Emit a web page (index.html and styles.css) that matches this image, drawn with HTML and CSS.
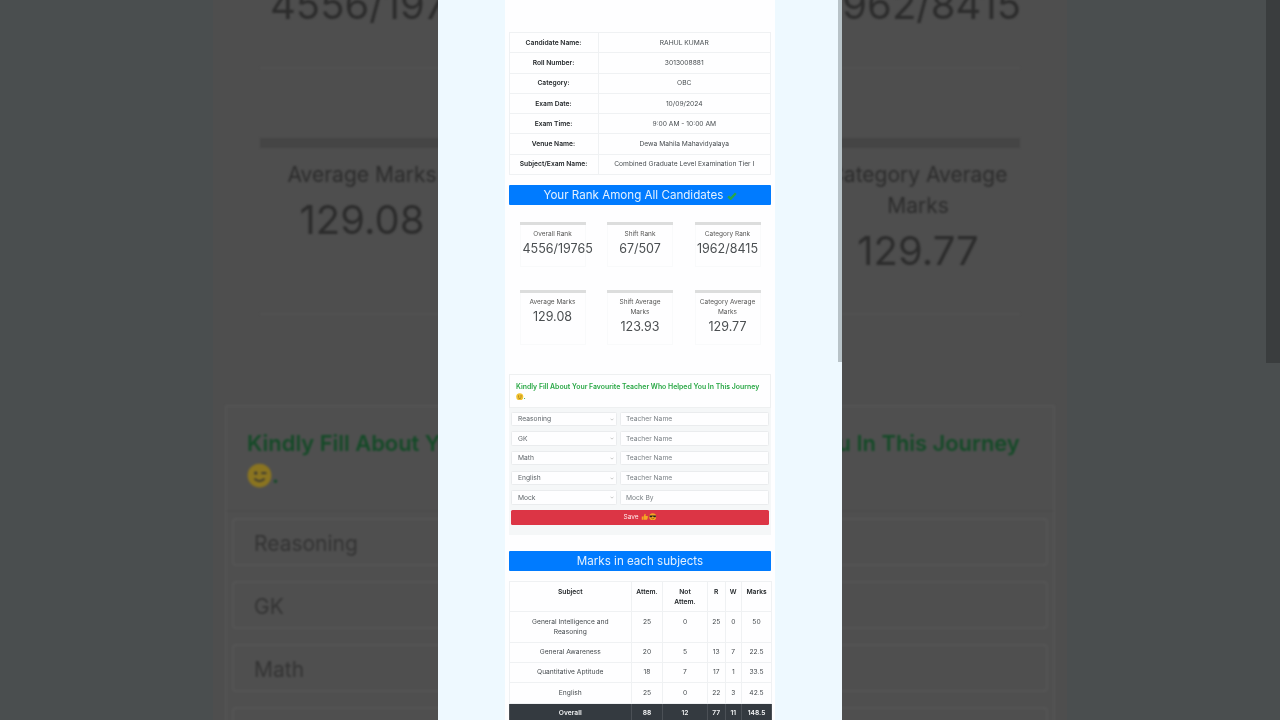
FILE: index.html
```html
<!DOCTYPE html>
<html lang="en">
<head>
<meta charset="utf-8">
<title>Your Rank</title>
<link rel="stylesheet" href="styles.css">
</head>
<body>
<div class="backdrop">
  <div class="bd-page">
    <div class="bd-stats">
      <div class="bd-card"><div class="bd-bar"></div><div class="bd-label">Overall Rank</div><div class="bd-value">4556/19765</div></div>
      <div class="bd-card"><div class="bd-bar"></div><div class="bd-label">Shift Rank</div><div class="bd-value">67/507</div></div>
      <div class="bd-card"><div class="bd-bar"></div><div class="bd-label">Category Rank</div><div class="bd-value">1962/8415</div></div>
      <div class="bd-card"><div class="bd-bar"></div><div class="bd-label">Average Marks</div><div class="bd-value">129.08</div></div>
      <div class="bd-card"><div class="bd-bar"></div><div class="bd-label">Shift Average Marks</div><div class="bd-value">123.93</div></div>
      <div class="bd-card"><div class="bd-bar"></div><div class="bd-label">Category Average Marks</div><div class="bd-value">129.77</div></div>
    </div>
    <div class="bd-panel">
      <div class="bd-head">Kindly Fill About Your Favourite Teacher Who Helped You In This Journey
        <svg class="bd-emoji" viewBox="0 0 20 20"><circle cx="10" cy="10" r="9.5" fill="#8a7420"/><circle cx="7" cy="8" r="1.3" fill="#333"/><path d="M11.5 8h4M6 12.5q4 4 8 0" stroke="#333" stroke-width="1.4" fill="none"/></svg>.
      </div>
      <div class="bd-box">Reasoning</div>
      <div class="bd-box">GK</div>
      <div class="bd-box">Math</div>
      <div class="bd-box">English</div>
    </div>
  </div>
  <div class="bd-strip"></div>
</div>

<main class="phone">
  <div class="sheet">
    <table class="info">
      <tr><th>Candidate Name:</th><td>RAHUL KUMAR</td></tr>
      <tr><th>Roll Number:</th><td>3013008881</td></tr>
      <tr><th>Category:</th><td>OBC</td></tr>
      <tr><th>Exam Date:</th><td>10/09/2024</td></tr>
      <tr><th>Exam Time:</th><td>9:00 AM - 10:00 AM</td></tr>
      <tr><th>Venue Name:</th><td>Dewa Mahila Mahavidyalaya</td></tr>
      <tr><th>Subject/Exam Name:</th><td>Combined Graduate Level Examination Tier I</td></tr>
    </table>

    <h2 class="banner">Your Rank Among All Candidates
      <svg class="check" viewBox="0 0 12 10"><path d="M1.2 5.4 4.3 8.4 10.8 1.6" fill="none" stroke="#28a745" stroke-width="3"/></svg>
    </h2>

    <section class="stats">
      <div class="stat"><div class="stat-bar"></div><div class="stat-label">Overall Rank</div><div class="stat-value">4556/19765</div></div>
      <div class="stat"><div class="stat-bar"></div><div class="stat-label">Shift Rank</div><div class="stat-value">67/507</div></div>
      <div class="stat"><div class="stat-bar"></div><div class="stat-label">Category Rank</div><div class="stat-value">1962/8415</div></div>
      <div class="stat"><div class="stat-bar"></div><div class="stat-label">Average Marks</div><div class="stat-value">129.08</div></div>
      <div class="stat"><div class="stat-bar"></div><div class="stat-label">Shift Average Marks</div><div class="stat-value">123.93</div></div>
      <div class="stat"><div class="stat-bar"></div><div class="stat-label">Category Average Marks</div><div class="stat-value">129.77</div></div>
    </section>

    <form class="panel">
      <div class="panel-head">Kindly Fill About Your Favourite Teacher Who Helped You In This Journey
        <svg class="emoji" viewBox="0 0 20 20"><circle cx="10" cy="10" r="9.5" fill="#f2c230"/><circle cx="7" cy="8" r="1.4" fill="#6b4a10"/><path d="M11.5 8h4M6 12.5q4 4 8 0" stroke="#6b4a10" stroke-width="1.5" fill="none"/></svg>.
      </div>
      <div class="row"><div class="select-wrap"><select><option>Reasoning</option></select><svg class="chev" viewBox="0 0 6 4"><path d="M.8.8 3 3 5.2.8" fill="none" stroke="#999" stroke-width=".8"/></svg></div><input type="text" placeholder="Teacher Name"></div>
      <div class="row"><div class="select-wrap"><select><option>GK</option></select><svg class="chev" viewBox="0 0 6 4"><path d="M.8.8 3 3 5.2.8" fill="none" stroke="#999" stroke-width=".8"/></svg></div><input type="text" placeholder="Teacher Name"></div>
      <div class="row"><div class="select-wrap"><select><option>Math</option></select><svg class="chev" viewBox="0 0 6 4"><path d="M.8.8 3 3 5.2.8" fill="none" stroke="#999" stroke-width=".8"/></svg></div><input type="text" placeholder="Teacher Name"></div>
      <div class="row"><div class="select-wrap"><select><option>English</option></select><svg class="chev" viewBox="0 0 6 4"><path d="M.8.8 3 3 5.2.8" fill="none" stroke="#999" stroke-width=".8"/></svg></div><input type="text" placeholder="Teacher Name"></div>
      <div class="row"><div class="select-wrap"><select><option>Mock</option></select><svg class="chev" viewBox="0 0 6 4"><path d="M.8.8 3 3 5.2.8" fill="none" stroke="#999" stroke-width=".8"/></svg></div><input type="text" placeholder="Mock By"></div>
      <button type="button" class="save">Save
        <svg class="btn-emoji" viewBox="0 0 20 20"><path d="M2 9h4v9H2zM7 9l3-7q3 0 2.500 3L12 8h5q2 0 1.500 2l-1.500 6q-.5 2-2 2H7z" fill="#f5a623"/></svg><svg class="btn-emoji" viewBox="0 0 20 20"><circle cx="10" cy="10" r="9.500" fill="#f5a623"/><path d="M1.500 6.500h17v2l-1 3h-5l-1.500-3h-2l-1.500 3h-5l-1-3z" fill="#222"/><path d="M6 14q4 3 8 0" stroke="#7a3c00" stroke-width="1.400" fill="none"/></svg>
      </button>
    </form>

    <h2 class="banner marks-banner">Marks in each subjects</h2>

    <table class="marks">
      <colgroup><col class="c1"><col class="c2"><col class="c3"><col class="c4"><col class="c5"><col class="c6"></colgroup>
      <tr><th>Subject</th><th>Attem.</th><th>Not Attem.</th><th>R</th><th>W</th><th>Marks</th></tr>
      <tr><td>General Intelligence and Reasoning</td><td>25</td><td>0</td><td>25</td><td>0</td><td>50</td></tr>
      <tr><td>General Awareness</td><td>20</td><td>5</td><td>13</td><td>7</td><td>22.5</td></tr>
      <tr><td>Quantitative Aptitude</td><td>18</td><td>7</td><td>17</td><td>1</td><td>33.5</td></tr>
      <tr><td>English</td><td>25</td><td>0</td><td>22</td><td>3</td><td>42.5</td></tr>
      <tr class="total"><th>Overall</th><th>88</th><th>12</th><th>77</th><th>11</th><th>148.5</th></tr>
    </table>
  </div>
  <div class="scrollbar"></div>
</main>
</body>
</html>
```

FILE: styles.css
```css
* { box-sizing: border-box; }
html, body { margin: 0; height: 720px; overflow: hidden; }
body {
  position: relative;
  font-family: Inter, "Noto Sans", sans-serif;
  background: linear-gradient(to right, #4a4e4f 0 213px, #4e4e4e 213px 1067px, #4a4e4f 1067px);
}

/* Blurred video backdrop */
.backdrop { position: absolute; inset: 0; overflow: hidden; }
.bd-page { width: 830px; margin: 0 auto; filter: blur(1.200px); color: #2c2c2c; }
.bd-stats {
  display: grid;
  grid-template-columns: repeat(3, 204px);
  column-gap: 74px;
  row-gap: 69px;
  padding: 0 35px;
  margin-top: -77px;
}
.bd-card { height: 146px; text-align: center; border-bottom: 2px solid #525252; }
.bd-card:nth-child(n+4) { height: 177px; }
.bd-bar { height: 10px; background: #454545; margin-bottom: 11px; }
.bd-label { font-size: 21px; line-height: 31px; margin-bottom: 7px; }
.bd-value { font-size: 40px; line-height: 46px; white-space: nowrap; }
.bd-card:nth-child(-n+3) .bd-value { text-align: left; padding-left: 10px; }
.bd-panel {
  margin-top: 90px;
  height: 400px;
  border: 2px solid #545454;
  background: #4f4f4f;
}
.bd-head {
  height: 105px;
  padding: 20px 20px 0;
  font-size: 21.900px;
  line-height: 32px;
  font-weight: 600;
  color: #144a27;
  border-bottom: 2px solid #4b4b4b;
  margin-bottom: 6px;
}
.bd-emoji { width: 25px; height: 25px; vertical-align: -5px; }
.bd-box {
  margin: 0 5px 15px;
  height: 48px;
  padding-left: 20px;
  font-size: 21px;
  line-height: 48px;
  border: 2px solid #555;
  border-radius: 4px;
  color: #333;
}
.bd-strip { position: absolute; top: 0; right: 0; width: 14px; height: 363px; background: #3a3d3e; }

/* Foreground phone column */
.phone {
  position: relative;
  width: 404px;
  height: 720px;
  margin: 0 auto;
  overflow: hidden;
  background: #eef9ff;
}
.sheet {
  width: 270px;
  height: 720px;
  margin: 0 auto;
  padding: 32px 3.5px 0;
  background: #fff;
  color: #454a4f;
  opacity: .995;
  filter: blur(.3px);
}
.scrollbar { position: absolute; top: 0; right: 0; width: 4.5px; height: 362px; background: #b8c3c8; }

table { border-collapse: collapse; width: 262.500px; table-layout: fixed; font-size: 6.700px; line-height: 10px; text-align: center; }
th, td { border: 1px solid #f0f1f3; padding: 0 3px; font-weight: 400; }
th { font-weight: 600; color: #212529; }

.info tr { height: 20.3px; }
.info th { width: 89px; }

.banner {
  margin: 10px 0 0 .5px;
  height: 20px;
  width: 262px;
  background: #007bff;
  color: #e3f1ff;
  border-radius: 1px;
  font-size: 11.600px;
  font-weight: 400;
  line-height: 20px;
  text-align: center;
  white-space: nowrap;
}
.check { width: 10px; height: 8px; vertical-align: -0.500px; }
.marks-banner { margin-top: 16px; }

.stats {
  display: grid;
  grid-template-columns: repeat(3, 66px);
  grid-auto-rows: min-content;
  column-gap: 21.500px;
  row-gap: 23px;
  padding: 17px 11px 0;
  height: 169px;
}
.stat {
  height: 45px;
  text-align: center;
  border: 1px solid #fafbfb;
  border-top: 0;
}
.stat:nth-child(n+4) { height: 55px; }
.stat-bar { height: 3px; margin: 0 -1px 3.500px; background: #dcdddd; }
.stat-label { font-size: 6.500px; line-height: 10px; padding: 0 2px; color: #555; }
.stat-value { font-size: 12.500px; line-height: 15px; margin-top: 2px; padding-left: 2px; white-space: nowrap; color: #4b4f52; }
.stat:nth-child(n+2) .stat-value { padding-left: 0; }

.panel {
  display: flex;
  flex-direction: column;
  width: 262px;
  margin-left: .5px;
  height: 161px;
  background: #f6f7f8;
}
.panel-head {
  height: 34px;
  padding: 7px 6px 0;
  margin-bottom: 3.500px;
  background: #fff;
  border: 1px solid #eef0f1;
  color: #28a745;
  font-size: 6.900px;
  line-height: 10px;
  font-weight: 600;
}
.emoji { width: 7.500px; height: 7.500px; vertical-align: -1px; }
.row {
  display: flex;
  gap: 3.500px;
  height: 14.500px;
  margin: 0 2px 5.200px;
}
.select-wrap { position: relative; width: 105.500px; flex: none; }
select, input {
  width: 100%;
  height: 100%;
  display: block;
  appearance: none;
  border: 1px solid #eaecee;
  border-radius: 1.500px;
  background: #fff;
  font: 400 6.700px/10px Inter, sans-serif;
  color: #5f656b;
  outline: none;
}
select { padding: 0 0 0 6px; }
input { padding: 0 5px; flex: 1; min-width: 0; }
input::placeholder { color: #7a8086; opacity: 1; }
.chev { position: absolute; right: 2.500px; top: 6px; width: 4px; height: 3px; }
.save {
  height: 15px;
  margin: 0 2px;
  padding: 0;
  border: 0;
  border-radius: 1.500px;
  background: #dc3545;
  color: #ffe9ea;
  font: 400 6.500px/15px Inter, sans-serif;
  text-align: center;
}
.btn-emoji { width: 7.500px; height: 7.500px; vertical-align: -1px; margin-left: .500px; }

.marks { margin-top: 10px; }
.marks col.c1 { width: 122.500px; }
.marks col.c2 { width: 31px; }
.marks col.c3 { width: 45px; }
.marks col.c4 { width: 17.500px; }
.marks col.c5 { width: 16.500px; }
.marks col.c6 { width: 30px; }
.marks th, .marks td { vertical-align: top; padding: 4.500px 2px 4.800px; }
.marks th:first-child, .marks td:first-child { padding-left: 12px; padding-right: 12px; }
.marks th:nth-child(3) { padding-left: 10px; padding-right: 10px; }
.marks tr { height: 20.300px; }
.marks .total th { background: #343a40; color: #f1f2f3; border-color: #4b5056; }
```
